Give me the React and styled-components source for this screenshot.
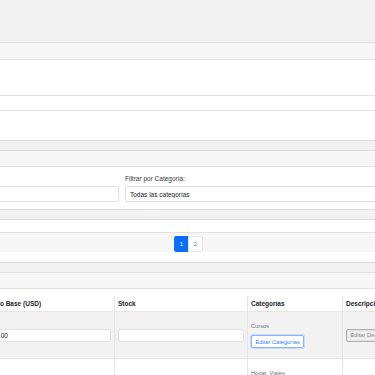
import React from "react";
import styled, { createGlobalStyle } from "styled-components";

const GlobalStyle = createGlobalStyle`
  *, *::before, *::after {
    box-sizing: border-box;
  }
  html, body {
    margin: 0;
    padding: 0;
    overflow: hidden;
  }
  body {
    background: #f2f2f2;
    font-family: "Liberation Sans", Arial, sans-serif;
    font-size: 6.5px;
    color: #212529;
  }
`;

// the page is wider than the window and scrolled to the right
const Page = styled.div`
  width: 1177px;
  margin-left: -400px;
`;

const PageTitle = styled.h1`
  margin: 0;
  height: 42px;
  line-height: 42px;
  padding: 0 8px;
  font-size: 12px;
  font-weight: bold;
  color: #333;
`;

const CardStack = styled.div`
  display: flex;
  flex-direction: column;
  gap: 9px;
`;

const Card = styled.section`
  background: #fff;
  border: 1px solid #dcdcdc;
  border-radius: 3px;
`;

const CardHeader = styled.div`
  height: ${(p) => (p.$tall ? 17 : 16)}px;
  line-height: ${(p) => (p.$tall ? 16 : 15)}px;
  padding: 0 8px;
  background: #f7f7f7;
  border-bottom: 1px solid #e2e2e2;
  font-weight: bold;
  color: #333;
`;

const FormBody = styled.div`
  padding: 27px 8px 29px;
`;

const FilterBody = styled.div`
  padding: 8px 8px 7px;
`;

const FilterGrid = styled.div`
  display: grid;
  grid-template-columns: 510px 1fr;
  gap: 6px;
`;

const Label = styled.label`
  display: block;
  line-height: 8px;
  margin-bottom: ${(p) => p.$gap || 0}px;
  color: #3a3a3a;
`;

const TextInput = styled.input`
  display: block;
  width: 100%;
  height: ${(p) => p.$h || 16}px;
  padding: 0 3px;
  font: inherit;
  color: #212529;
  background: #fff;
  border: 1px solid #e3e3e3;
  border-radius: 2px;
  outline: none;
`;

const Select = styled.select`
  display: block;
  width: 100%;
  height: 16px;
  padding: 0 4px;
  font: inherit;
  color: #212529;
  background: #fff;
  border: 1px solid #e0e0e0;
  border-radius: 2px;
  appearance: none;
  outline: none;
`;

const InfoBody = styled.div`
  padding: 2px 8px;
  line-height: 8px;
  border-bottom: 1px solid #e2e2e2;
  color: #6c757d;
`;

const Footer = styled.div`
  padding: 3px 8px 0;
  background: #f7f7f7;
`;

const Pagination = styled.ul`
  display: flex;
  justify-content: center;
  list-style: none;
  margin: 0 0 10px;
  padding: 0;
`;

const PageLink = styled.button`
  min-width: 15px;
  height: 16px;
  margin-left: ${(p) => (p.$first ? 0 : -1)}px;
  padding: 0 4px;
  font: inherit;
  font-size: 6px;
  color: ${(p) => (p.$active ? "#fff" : "#3d86fd")};
  background: ${(p) => (p.$active ? "#0d6efd" : "#fff")};
  border: 1px solid ${(p) => (p.$active ? "#0d6efd" : "#e4e7eb")};
  border-radius: ${(p) => (p.$first ? "2px 0 0 2px" : "0 2px 2px 0")};
`;

const TableBody = styled.div`
  padding: 7px 8px 0;
`;

const Table = styled.table`
  width: 100%;
  table-layout: fixed;
  border-collapse: separate;
  border-spacing: 0;
`;

const Th = styled.th`
  width: ${(p) => p.$w}px;
  padding: 4px 3px;
  line-height: 7px;
  text-align: left;
  font-weight: bold;
  color: #212529;
  white-space: nowrap;
  overflow: hidden;
  border-right: 1px solid #e6e6e6;
  border-bottom: 1px solid #e6e6e6;
`;

const Row = styled.tr`
  background: ${(p) => (p.$striped ? "#f2f2f2" : "#fff")};
`;

const Td = styled.td`
  padding: 4px 3px;
  vertical-align: middle;
  white-space: nowrap;
  overflow: hidden;
  border-right: 1px solid #e6e6e6;
  border-bottom: 1px solid #e6e6e6;
`;

const Thumb = styled.div`
  width: 38px;
  height: 38px;
  background: #ddd;
  border-radius: 2px;
`;

const CategoryText = styled.div`
  font-size: 5.7px;
  line-height: 8px;
  margin-bottom: 5px;
  color: #6c757d;
`;

const SmallButton = styled.button`
  height: 13px;
  padding: 0 3.5px;
  font: inherit;
  font-size: 5.7px;
  white-space: nowrap;
  border-radius: 2px;
  color: ${(p) => (p.$muted ? "#8a8a8a" : "#2f7ffd")};
  background: ${(p) => (p.$muted ? "#efefef" : "#fff")};
  border: 1px solid ${(p) => (p.$muted ? "#b0b0b0" : "#86b4fb")};
  box-shadow: ${(p) =>
    p.$muted ? "inset 0 0 0 1px #e2e2e2" : "0 0 0 1px rgba(110, 168, 254, 0.3)"};
`;

const products = [
  { id: 1, name: "Curso de React", price: "100.00", stock: "", categories: "Cursos" },
  { id: 2, name: "Paquete Vacacional", price: "850.00", stock: "", categories: "Hogar, Viajes" },
];

const columns = [
  ["ID", 40],
  ["Imagen", 50],
  ["Nombre", 282],
  ["Precio Base (USD)", 134],
  ["Stock", 133],
  ["Categorías", 95],
  ["Descripción", 120],
  ["Acciones", 307],
];

const App = () => {
  return (
    <>
      <GlobalStyle />
      <Page>
        <PageTitle>Gestión de Productos</PageTitle>
        <CardStack>
          <Card>
            <CardHeader $tall>Agregar Producto</CardHeader>
            <FormBody>
              <Label>Descripción</Label>
              <TextInput defaultValue="" />
            </FormBody>
          </Card>

          <Card>
            <CardHeader>Filtros</CardHeader>
            <FilterBody>
              <FilterGrid>
                <div>
                  <Label $gap={3}>Buscar:</Label>
                  <TextInput defaultValue="" />
                </div>
                <div>
                  <Label $gap={3}>Filtrar por Categoría:</Label>
                  <Select defaultValue="">
                    <option value="">Todas las categorías</option>
                    <option value="cursos">Cursos</option>
                    <option value="hogar">Hogar</option>
                    <option value="viajes">Viajes</option>
                  </Select>
                </div>
              </FilterGrid>
            </FilterBody>
          </Card>

          <Card>
            <InfoBody>Mostrando 10 de 15 productos</InfoBody>
            <Footer>
              <Pagination>
                <li>
                  <PageLink $first $active>1</PageLink>
                </li>
                <li>
                  <PageLink>2</PageLink>
                </li>
              </Pagination>
            </Footer>
          </Card>

          <Card>
            <CardHeader>Productos</CardHeader>
            <TableBody>
              <Table>
                <thead>
                  <tr>
                    {columns.map(([title, w]) => (
                      <Th key={title} $w={w}>
                        {title}
                      </Th>
                    ))}
                  </tr>
                </thead>
                <tbody>
                  {products.map((p, i) => (
                    <Row key={p.id} $striped={i % 2 === 0}>
                      <Td>{p.id}</Td>
                      <Td>
                        <Thumb />
                      </Td>
                      <Td>
                        <TextInput $h={13} defaultValue={p.name} />
                      </Td>
                      <Td>
                        <TextInput $h={13} defaultValue={p.price} />
                      </Td>
                      <Td>
                        <TextInput $h={13} defaultValue={p.stock} />
                      </Td>
                      <Td>
                        <CategoryText>{p.categories}</CategoryText>
                        <SmallButton>Editar Categorías</SmallButton>
                      </Td>
                      <Td>
                        <SmallButton $muted>Editar Descripción</SmallButton>
                      </Td>
                      <Td>
                        <SmallButton>Guardar</SmallButton>
                      </Td>
                    </Row>
                  ))}
                </tbody>
              </Table>
            </TableBody>
          </Card>
        </CardStack>
      </Page>
    </>
  );
};

export default App;
